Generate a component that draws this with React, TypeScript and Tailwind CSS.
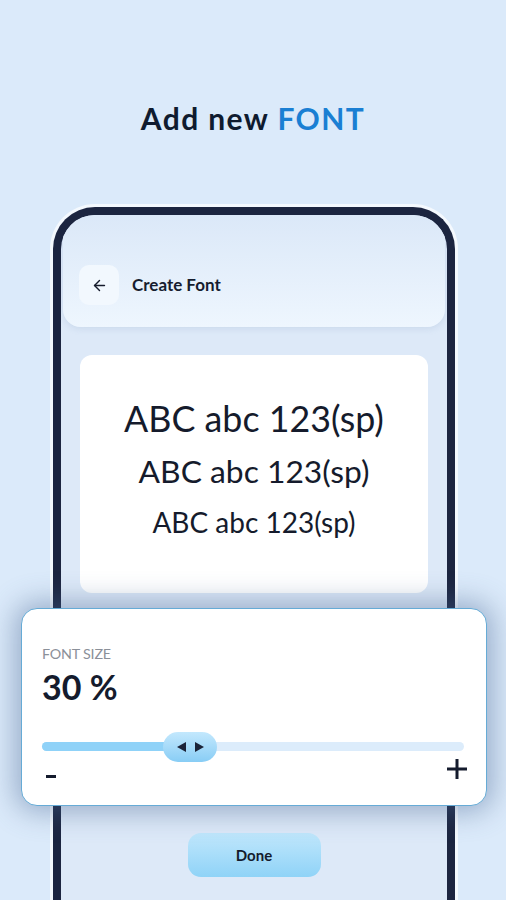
import React from "react";
import { ArrowLeft } from "lucide-react";

const Sample = () => {
  return (
    <div className="mx-[19px] mt-[28px] h-[238px] rounded-[12px] bg-white flex flex-col items-center text-[#151b2c]">
      <div className="mt-[43px] text-[35.8px] leading-[42px]">ABC abc 123(sp)</div>
      <div className="mt-[12px] text-[31.8px] leading-[38px]">ABC abc 123(sp)</div>
      <div className="mt-[15px] text-[28px] leading-[34px]">ABC abc 123(sp)</div>
    </div>
  );
};

const FontSizeSheet = () => {
  return (
    <div className="absolute left-[21px] top-[608px] w-[466px] h-[198px] rounded-[16px] bg-white border border-[#66abd6] shadow-[0_0_28px_6px_rgba(70,100,145,0.45)] px-[20px]">
      <div className="mt-[36px] text-[14.3px] leading-[17px] text-[#8b9099] tracking-[-0.2px]">FONT SIZE</div>
      <div className="mt-[5px] text-[34px] leading-[40px] font-bold text-[#141b2d]">30 %</div>
      <div className="relative mt-[35px] h-[9px] mr-[2px] rounded-full bg-[#dcecfb]">
        <div className="h-full w-[140px] rounded-l-full bg-[#8fd2f8]"></div>
        <div className="absolute left-[121px] top-[-10px] w-[54px] h-[30px] rounded-full bg-gradient-to-b from-[#c3e8fd] to-[#88cdf5] flex items-center justify-center gap-[9px]">
          <svg width="9" height="10" viewBox="0 0 9 10">
            <polygon points="9,0 9,10 0,5" fill="#1b2338" />
          </svg>
          <svg width="9" height="10" viewBox="0 0 9 10">
            <polygon points="0,0 0,10 9,5" fill="#1b2338" />
          </svg>
        </div>
      </div>
      <div className="flex justify-between items-start mt-[8px] pl-[4px] -mr-[1px]">
        <div className="w-[10px] h-[3px] bg-[#141b2d] mt-[16px]"></div>
        <svg width="20" height="20" viewBox="0 0 20 20">
          <rect x="8.5" y="0" width="3" height="20" fill="#141b2d" />
          <rect x="0" y="8.5" width="20" height="3" fill="#141b2d" />
        </svg>
      </div>
    </div>
  );
};

export default function App() {
  return (
    <div className="relative w-[506px] h-[900px] overflow-hidden bg-[#dbeafa] flex flex-col font-['Lato','Noto_Sans',sans-serif]">
      <h1 className="pt-[99px] text-center text-[30px] leading-[38px] font-bold text-[#0f1b2f] tracking-[1.4px]">
        Add new <span className="text-[#1a7fd3]">FONT</span>
      </h1>

      <div className="mt-[70px] ml-[53px] w-[402px] flex-1 rounded-t-[42px] border-[8px] border-b-0 border-[#1c2540] bg-[#dde9f8] shadow-[0_0_0_3px_rgba(255,255,255,0.7)] flex flex-col overflow-hidden">
        <div className="mx-[2px] h-[112px] rounded-b-[18px] bg-gradient-to-b from-[#dbe8f8] to-[#eef6fe] shadow-[0_2px_6px_rgba(120,150,190,0.18)] flex items-end pb-[22px] pl-[16px]">
          <div className="w-[40px] h-[40px] rounded-[10px] bg-[#f2f8fe] flex items-center justify-center">
            <ArrowLeft size={17} strokeWidth={2} color="#151b2c" />
          </div>
          <div className="ml-[13px] mb-[10px] text-[17px] leading-[20px] font-bold text-[#161d2f]">Create Font</div>
        </div>

        <Sample />

        <div className="mt-[240px] mx-auto w-[133px] h-[44px] rounded-[13px] bg-gradient-to-b from-[#c0e7fc] to-[#8fd3f7] flex items-center justify-center text-[15px] font-bold text-[#141b2d]">
          Done
        </div>
      </div>

      <FontSizeSheet />
    </div>
  );
}
